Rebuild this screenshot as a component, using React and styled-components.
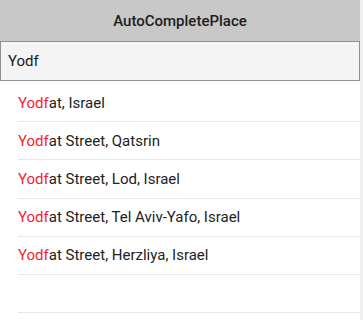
import React from "react";
import styled, { createGlobalStyle } from "styled-components";

const GlobalStyle = createGlobalStyle`
  html, body {
    margin: 0;
    padding: 0;
    background: #ffffff;
  }
  body {
    font-family: Roboto, "Noto Sans", "Liberation Sans", sans-serif;
    -webkit-font-smoothing: antialiased;
  }
`;

const Screen = styled.div`
  width: 363px;
  height: 320px;
  display: flex;
  overflow: hidden;
  background: #ffffff;
`;

const Main = styled.div`
  flex: 1;
  display: flex;
  flex-direction: column;
  min-width: 0;
`;

const Edge = styled.div`
  width: 3px;
  background: #efefef;
`;

const Header = styled.div`
  height: 41px;
  background: #c8c8c8;
  display: flex;
  align-items: center;
  justify-content: center;
  font-size: 15px;
  font-weight: 500;
  color: #1c1c1c;
`;

const SearchInput = styled.input`
  height: 40px;
  box-sizing: border-box;
  margin: 0;
  padding: 0 7px;
  border: 1.5px solid #8f8f8f;
  background: #f4f4f4;
  font-family: inherit;
  font-size: 15px;
  color: #1a1a1a;
  outline: none;
`;

const List = styled.ul`
  list-style: none;
  margin: 0;
  padding: 3px 0 0 18px;
`;

const Row = styled.li`
  height: 38.2px;
  box-sizing: border-box;
  border-bottom: 1px solid #e8e8e8;
  display: flex;
  align-items: center;
  font-size: 15px;
  color: #222222;
  white-space: nowrap;
`;

const Match = styled.span`
  color: #f4242c;
`;

const query = "Yodf";

const places = [
  "Yodfat, Israel",
  "Yodfat Street, Qatsrin",
  "Yodfat Street, Lod, Israel",
  "Yodfat Street, Tel Aviv-Yafo, Israel",
  "Yodfat Street, Herzliya, Israel",
  "",
];

export default function App() {
  return (
    <>
      <GlobalStyle />
      <Screen>
        <Main>
          <Header>AutoCompletePlace</Header>
          <SearchInput defaultValue={query} />
          <List>
            {places.map((place, i) => (
              <Row key={i}>
                {place && (
                  <>
                    <Match>{place.slice(0, query.length)}</Match>
                    {place.slice(query.length)}
                  </>
                )}
              </Row>
            ))}
          </List>
        </Main>
        <Edge />
      </Screen>
    </>
  );
}
